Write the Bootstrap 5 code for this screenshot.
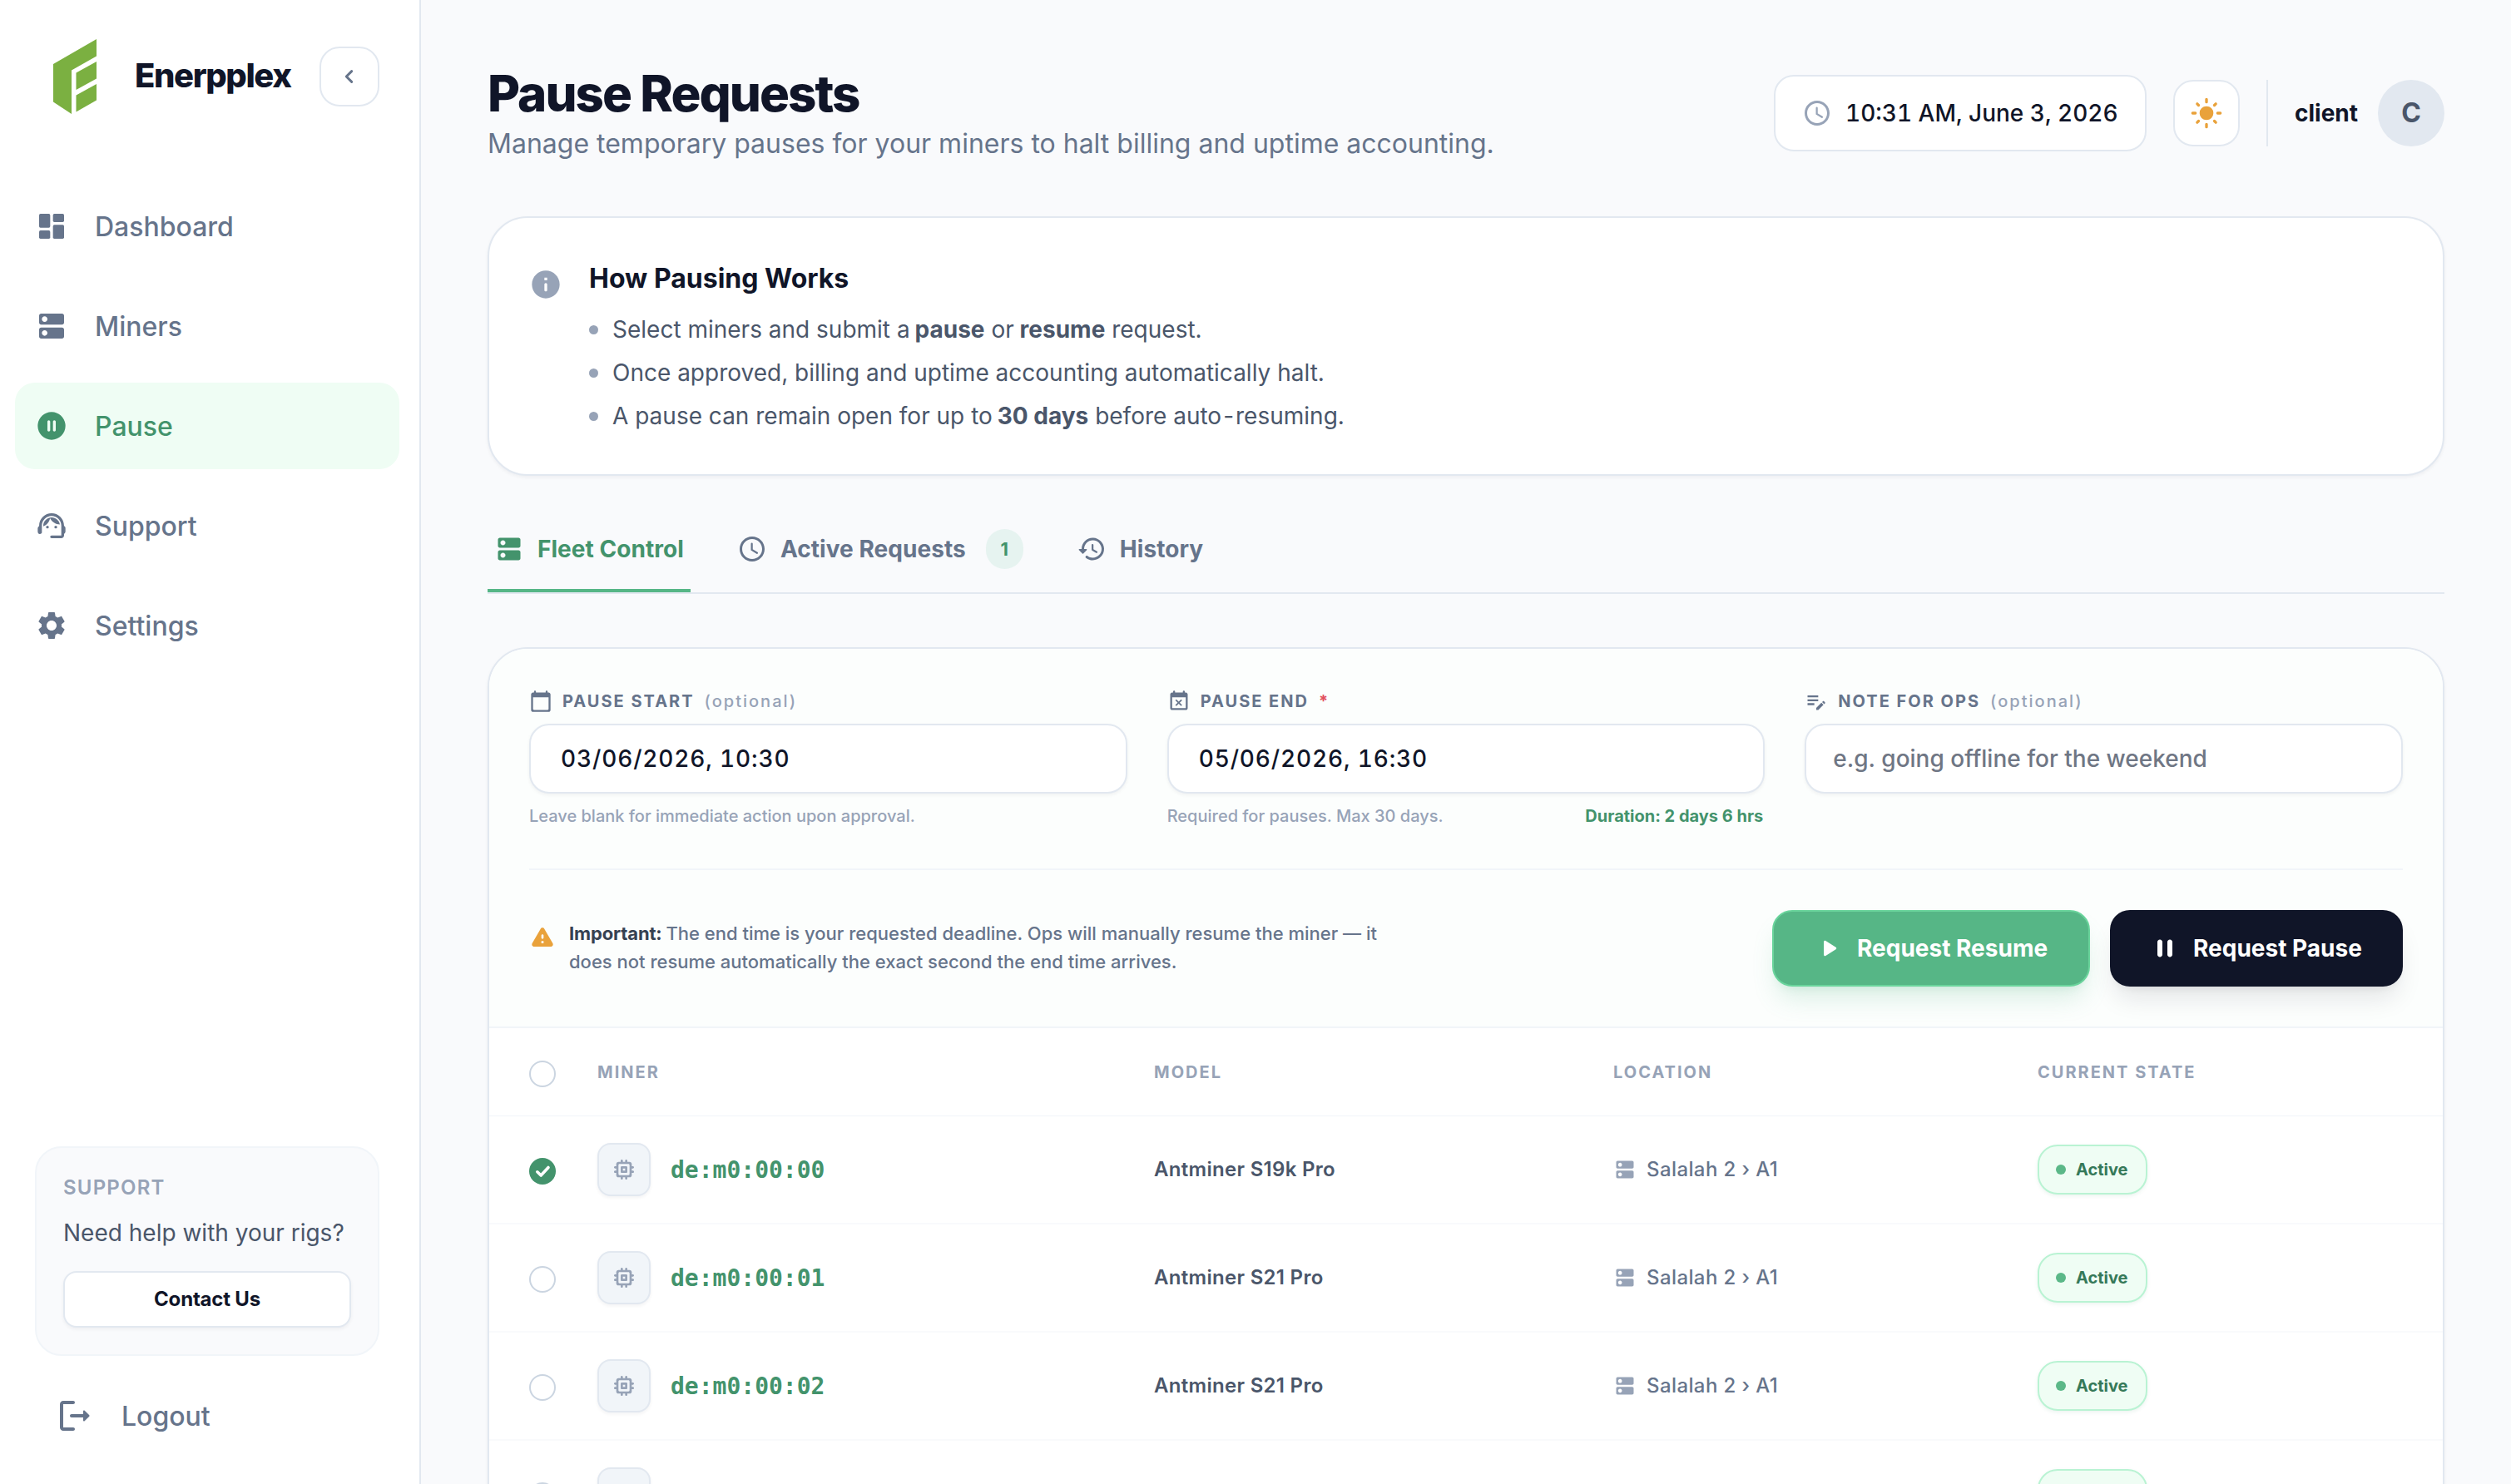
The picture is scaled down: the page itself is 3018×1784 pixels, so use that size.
<!DOCTYPE html>
<html lang="en">
    <head>
        <meta charset="UTF-8" />
        <meta name="viewport" content="width=device-width, initial-scale=1.0" />
        <title>Enerpplex - Pause Requests</title>
        <link
            href="https://cdn.jsdelivr.net/npm/bootstrap@5.3.0/dist/css/bootstrap.min.css"
            rel="stylesheet"
        />
        <script src="https://cdn.jsdelivr.net/npm/bootstrap@5.3.0/dist/js/bootstrap.bundle.min.js"></script>

        <style>
            :root {
                --ink: #101528;
                --ink-soft: #4a566a;
                --slate: #66748b;
                --mist: #97a3b7;
                --line: #e2e8f0;
                --line-soft: #f1f5f9;
                --green: #43936c;
            }

            body {
                font-family: Inter, "Liberation Sans", sans-serif;
                font-size: 28px;
                color: var(--ink);
                background-color: #f9fafc;
            }

            svg {
                fill: currentColor;
                flex: none;
            }

            .i-28 { width: 28px; height: 28px; }
            .i-32 { width: 32px; height: 32px; }
            .i-36 { width: 36px; height: 36px; }
            .i-40 { width: 40px; height: 40px; }
            .i-48 { width: 48px; height: 48px; }
            .text-slate { color: var(--slate); }
            .text-mist { color: var(--mist); }
            .text-green { color: var(--green); }

            /* sidebar */
            .sidebar {
                width: 506px;
                flex: none;
                border-right: 2px solid var(--line);
            }
            .brand {
                height: 184px;
                padding: 0 48px 0 64px;
            }
            .brand-name {
                font-size: 40px;
                font-weight: 800;
                letter-spacing: -1.4px;
                margin-left: 46px;
                padding-bottom: 2px;
            }
            .collapse-btn {
                width: 72px;
                height: 72px;
                border: 2px solid var(--line);
                border-radius: 24px;
            }
            .side-nav {
                gap: 16px;
                padding: 36px 24px 0 18px;
            }
            .side-nav .nav-link,
            .logout {
                color: var(--slate);
                font-size: 32px;
                font-weight: 500;
            }
            .side-nav .nav-link span,
            .logout span {
                padding-top: 2px;
            }
            .side-nav .nav-link {
                height: 104px;
                padding: 0 24px;
                gap: 32px;
                border-radius: 24px;
            }
            .side-nav .nav-link.active {
                color: var(--green);
                background-color: #effdf4;
            }
            .help-box {
                height: 252px;
                margin: 0 48px 0 42px;
                padding: 32px;
                background-color: #f9fafc;
                border: 2px solid var(--line-soft);
                border-radius: 32px;
            }
            .help-title {
                font-size: 24px;
                font-weight: 600;
                letter-spacing: 1.2px;
                line-height: 32px;
            }
            .help-text {
                line-height: 44px;
                margin: 16px 0 24px;
                color: var(--ink-soft);
            }
            .help-btn {
                height: 68px;
                font-size: 24px;
                font-weight: 700;
                letter-spacing: -0.2px;
                color: var(--ink);
                background-color: #fff;
                border: 2px solid var(--line);
                border-radius: 16px;
                box-shadow: 0 2px 4px rgba(15, 23, 42, 0.05);
            }
            .logout {
                height: 96px;
                margin: 24px 0 34px 66px;
                gap: 32px;
            }

            /* page header */
            .page {
                padding: 76px 80px 0;
                min-width: 0;
            }
            .page-title {
                font-size: 60px;
                font-weight: 800;
                line-height: 72px;
                letter-spacing: -1.95px;
            }
            .page-sub {
                font-size: 32px;
                line-height: 49px;
                margin-bottom: -1px;
            }
            .clock-box {
                width: 448px;
                height: 92px;
                padding-left: 32px;
                gap: 16px;
                font-weight: 500;
                font-variant-numeric: tabular-nums;
                background-color: #fff;
                border: 2px solid var(--line);
                border-radius: 24px;
            }
            .theme-btn {
                width: 80px;
                height: 80px;
                color: #e9a23b;
                background-color: #fff;
                border: 2px solid var(--line);
                border-radius: 24px;
            }
            .header-tools {
                gap: 32px;
            }
            .user-box {
                width: 214px;
                height: 80px;
                gap: 24px;
                font-weight: 700;
                border-left: 2px solid var(--line);
            }
            .avatar {
                width: 80px;
                height: 80px;
                font-size: 32px;
                font-weight: 700;
                color: var(--ink-soft);
                background-color: var(--line);
            }

            /* cards */
            .panel {
                background-color: #fff;
                border: 2px solid var(--line);
                border-radius: 48px;
                box-shadow: 0 2px 4px rgba(15, 23, 42, 0.05);
            }
            .how-panel {
                margin-top: 64px;
                padding: 48px;
                gap: 32px;
            }
            .how-icon {
                margin-top: 12px;
            }
            .how-title {
                font-size: 32px;
                font-weight: 700;
                line-height: 49px;
                margin-bottom: 16px;
            }
            .how-list {
                gap: 10px;
                color: var(--ink-soft);
            }
            .how-list li {
                display: flex;
                align-items: center;
                line-height: 42px;
            }
            .how-list li:last-child {
                margin-bottom: 1px;
            }
            .how-list strong {
                margin-left: -2px;
            }
            .how-list strong + strong {
                margin-left: -1px;
            }
            .how-list .dash {
                margin: 0 2px;
            }
            .how-list li::before {
                content: "";
                width: 11px;
                height: 11px;
                margin-right: 17px;
                border-radius: 50%;
                background-color: var(--mist);
            }

            /* tabs */
            .tab-row {
                margin-top: 40px;
                gap: 48px;
                border-bottom: 2px solid var(--line);
            }
            .tab-row .nav-link {
                height: 100px;
                padding: 0 8px;
                gap: 16px;
                color: var(--slate);
                font-weight: 700;
                letter-spacing: 0.05px;
                border-bottom: 4px solid transparent;
            }
            .tab-row .nav-link.active {
                color: var(--green);
                border-bottom-color: #56b686;
            }
            .count {
                width: 45px;
                height: 48px;
                margin-left: 8px;
                font-size: 22px;
                color: var(--green);
                background-color: #e6f3f0;
                border-radius: 24px;
            }

            /* request form */
            .fleet-panel {
                margin-top: 64px;
                height: 1100px;
                overflow: hidden;
            }
            .request-form {
                padding: 48px;
                background-color: #fcfefd;
                border-bottom: 2px solid var(--line-soft);
            }
            .form-grid {
                display: grid;
                grid-template-columns: repeat(3, 1fr);
                gap: 48px;
                padding-bottom: 48px;
                border-bottom: 2px solid var(--line-soft);
            }
            .field-label {
                height: 30px;
                gap: 12px;
                font-size: 20px;
                font-weight: 700;
                letter-spacing: 2px;
            }
            .field-label .opt {
                font-weight: 500;
                color: var(--mist);
            }
            .field-label .req {
                color: #e2515f;
            }
            .field-input {
                height: 84px;
                margin: 12px 0;
                padding: 0 32px;
                font-size: 28px;
                font-weight: 500;
                color: var(--ink);
                border: 2px solid var(--line);
                border-radius: 24px;
                box-shadow: 0 2px 4px rgba(15, 23, 42, 0.05);
            }
            .field-date {
                padding-left: 36px;
                letter-spacing: 0.85px;
                font-variant-numeric: tabular-nums;
            }
            .field-input::placeholder {
                color: #6f7684;
            }
            .field-hint {
                font-size: 20px;
                font-weight: 500;
                line-height: 30px;
                color: var(--mist);
            }
            .duration {
                font-weight: 700;
                margin-right: 2px;
            }
            .form-foot {
                padding-top: 48px;
            }
            .notice {
                gap: 16px;
                font-size: 22px;
                font-weight: 500;
                line-height: 34.5px;
                color: var(--slate);
            }
            .notice p {
                width: 1000px;
                padding-bottom: 2px;
            }
            .notice svg {
                margin-top: 5px;
                color: #e9a23b;
            }
            .notice strong {
                margin-right: -1px;
                letter-spacing: -0.15px;
                color: #364152;
            }
            .action-btn {
                height: 92px;
                padding: 0 0 0 48px;
                gap: 16px;
                font-size: 28px;
                font-weight: 700;
                color: #fff;
                border: 0;
                border-radius: 24px;
            }
            .btn-resume {
                width: 382px;
                background-color: #56b686;
                border: 2px solid #6ad49c;
                box-shadow: 0 20px 30px -6px rgba(86, 182, 134, 0.2),
                    0 8px 12px -8px rgba(86, 182, 134, 0.2);
            }
            .btn-pause {
                width: 352px;
                background-color: var(--ink);
                box-shadow: 0 20px 30px -6px rgba(15, 23, 42, 0.1),
                    0 8px 12px -8px rgba(15, 23, 42, 0.1);
            }

            /* miners table */
            .miner-table {
                table-layout: fixed;
                border-collapse: separate;
                border-spacing: 0;
                --bs-table-bg: #fff;
            }
            .miner-table th,
            .miner-table td {
                padding: 0;
                vertical-align: middle;
            }
            .miner-table th {
                height: 106px;
                font-size: 20px;
                font-weight: 700;
                letter-spacing: 2px;
                color: var(--mist);
                border-bottom: 1px solid var(--line-soft);
            }
            .miner-table td {
                height: 130px;
                font-size: 24px;
                border-bottom: 2px solid #f9fafc;
            }
            .miner-table th:first-child,
            .miner-table td:first-child {
                padding: 4px 0 0 48px;
            }
            .pick {
                display: block;
                width: 32px;
                height: 32px;
                border: 2px solid #cbd5e1;
                border-radius: 50%;
            }
            .chip {
                width: 64px;
                height: 64px;
                color: var(--mist);
                background-color: var(--line-soft);
                border: 2px solid var(--line);
                border-radius: 16px;
                box-shadow: 0 2px 4px rgba(15, 23, 42, 0.05);
            }
            .miner-id {
                padding-top: 1px;
                font-family: "DejaVu Sans Mono", monospace;
                font-size: 28px;
                font-weight: 700;
            }
            .miner-table .model {
                font-weight: 600;
                letter-spacing: 0.3px;
                color: var(--ink-soft);
            }
            .place {
                gap: 12px;
                font-weight: 500;
                letter-spacing: 0.4px;
            }
            .state {
                width: 132px;
                height: 60px;
                padding-left: 20px;
                gap: 12px;
                font-size: 20px;
                font-weight: 700;
                color: #357959;
                background-color: #effdf4;
                border: 2px solid #b9f3d3;
                border-radius: 24px;
                box-shadow: 0 2px 4px rgba(67, 147, 108, 0.1);
            }
            .state::before {
                content: "";
                width: 12px;
                height: 12px;
                border-radius: 50%;
                background-color: #5bb888;
            }
        </style>
    </head>
    <body class="vh-100 overflow-hidden">
        <!-- icon set -->
        <svg class="d-none">
            <symbol id="dashboard" viewBox="0 0 24 24">
                <rect x="3" y="3" width="8" height="10" rx="1" />
                <rect x="3" y="15" width="8" height="6" rx="1" />
                <rect x="13" y="3" width="8" height="6" rx="1" />
                <rect x="13" y="11" width="8" height="10" rx="1" />
            </symbol>
            <symbol id="dns" viewBox="0 0 24 24">
                <path d="M19.5 3h-15C3.67 3 3 3.67 3 4.5v5c0 .83.67 1.5 1.5 1.5h15c.83 0 1.5-.67 1.5-1.5v-5c0-.83-.67-1.5-1.5-1.5zM7 9c-1.1 0-2-.9-2-2s.9-2 2-2 2 .9 2 2-.9 2-2 2zM19.5 13h-15c-.83 0-1.5.67-1.5 1.5v5c0 .83.67 1.5 1.5 1.5h15c.83 0 1.5-.67 1.5-1.5v-5c0-.83-.67-1.5-1.5-1.5zM7 19c-1.1 0-2-.9-2-2s.9-2 2-2 2 .9 2 2-.9 2-2 2z" />
            </symbol>
            <symbol id="pause-circle" viewBox="0 0 24 24">
                <path d="M12 2C6.48 2 2 6.48 2 12s4.48 10 10 10 10-4.48 10-10S17.52 2 12 2zm-2 14c-.55 0-1-.45-1-1V9c0-.55.45-1 1-1s1 .45 1 1v6c0 .55-.45 1-1 1zm4 0c-.55 0-1-.45-1-1V9c0-.55.45-1 1-1s1 .45 1 1v6c0 .55-.45 1-1 1z" />
            </symbol>
            <symbol id="agent" viewBox="0 0 24 24">
                <path d="M21 12.22C21 6.73 16.74 3 12 3c-4.69 0-9 3.65-9 9.28-.6.34-1 .98-1 1.72v2c0 1.1.45 2 1.5 2S5 17.3 5 17v-5.1c0-3.87 3.13-7 7-7s7 3.13 7 7V19h-7c-.55 0-1 .45-1 1s.45 1 1 1h7c1.1 0 2-.9 2-2v-1.22c.59-.31 1-.92 1-1.64v-2.3c0-.7-.41-1.31-1-1.62z" />
                <circle cx="9" cy="13" r="1" />
                <circle cx="15" cy="13" r="1" />
                <path d="M18 11.03C17.52 8.18 15.04 6 12.05 6c-3.03 0-6.29 2.51-6.03 6.45 2.47-1.01 4.33-3.21 4.86-5.89 1.31 2.63 4 4.44 7.12 4.47z" />
            </symbol>
            <symbol id="gear" viewBox="0 0 24 24">
                <path d="M19.14 12.94c.04-.3.06-.61.06-.94 0-.32-.02-.64-.07-.94l2.03-1.58c.18-.14.23-.41.12-.61l-1.92-3.32c-.12-.22-.37-.29-.59-.22l-2.39.96c-.5-.38-1.03-.7-1.62-.94l-.36-2.54c-.04-.24-.24-.41-.48-.41h-3.84c-.24 0-.43.17-.47.41l-.36 2.54c-.59.24-1.13.57-1.62.94l-2.39-.96c-.22-.08-.47 0-.59.22L2.74 8.87c-.12.21-.08.47.12.61l2.03 1.58c-.05.3-.09.63-.09.94s.02.64.07.94l-2.03 1.58c-.18.14-.23.41-.12.61l1.92 3.32c.12.22.37.29.59.22l2.39-.96c.5.38 1.03.7 1.62.94l.36 2.54c.05.24.24.41.48.41h3.84c.24 0 .44-.17.47-.41l.36-2.54c.59-.24 1.13-.56 1.62-.94l2.39.96c.22.08.47 0 .59-.22l1.92-3.32c.12-.22.07-.47-.12-.61l-2.01-1.58zM12 15.6c-1.98 0-3.6-1.62-3.6-3.6s1.62-3.6 3.6-3.6 3.6 1.62 3.6 3.6-1.62 3.6-3.6 3.6z" />
            </symbol>
            <symbol id="logout" viewBox="0 0 24 24">
                <path d="M5 5h6c.55 0 1-.45 1-1s-.45-1-1-1H5c-1.1 0-2 .9-2 2v14c0 1.1.9 2 2 2h6c.55 0 1-.45 1-1s-.45-1-1-1H5V5z" />
                <path d="M20.65 11.65l-2.79-2.79c-.32-.32-.86-.1-.86.35V11h-7c-.55 0-1 .45-1 1s.45 1 1 1h7v1.79c0 .45.54.67.85.35l2.79-2.79c.2-.19.2-.51.01-.7z" />
            </symbol>
            <symbol id="info" viewBox="0 0 24 24">
                <path d="M12 2C6.48 2 2 6.48 2 12s4.48 10 10 10 10-4.48 10-10S17.52 2 12 2zm0 15c-.55 0-1-.45-1-1v-4c0-.55.45-1 1-1s1 .45 1 1v4c0 .55-.45 1-1 1zm1-8h-2V7h2v2z" />
            </symbol>
            <symbol id="clock" viewBox="0 0 24 24">
                <path d="M12 2C6.48 2 2 6.48 2 12s4.48 10 10 10 10-4.48 10-10S17.52 2 12 2zm0 18c-4.42 0-8-3.58-8-8s3.58-8 8-8 8 3.58 8 8-3.58 8-8 8z" />
                <path d="M11.75 7.75v4.9l4.2 2.5" fill="none" stroke="currentColor" stroke-width="1.5" stroke-linecap="round" />
            </symbol>
            <symbol id="sun" viewBox="0 0 24 24">
                <circle cx="12" cy="12" r="5" />
                <path d="M12 2v2M12 20v2M2 12h2M20 12h2M5.3 5.3l1 1M17.7 17.7l1 1M5.3 18.7l1-1M17.7 6.3l1-1" fill="none" stroke="currentColor" stroke-width="2" stroke-linecap="round" />
            </symbol>
            <symbol id="history" viewBox="0 0 24 24">
                <path d="M13.26 3C8.17 2.86 4 6.95 4 12H2.21c-.45 0-.67.54-.35.85l2.79 2.8c.2.2.51.2.71 0l2.79-2.8c.31-.31.09-.85-.36-.85H6c0-3.9 3.18-7.05 7.1-7 3.72.05 6.85 3.18 6.9 6.9.05 3.91-3.1 7.1-7 7.1-1.61 0-3.1-.55-4.28-1.48-.4-.31-.96-.28-1.32.08-.42.42-.39 1.13.08 1.49C9 20.29 10.91 21 13 21c5.05 0 9.14-4.17 9-9.26-.13-4.69-4.05-8.61-8.74-8.74zm-.51 5c-.41 0-.75.34-.75.75v3.68c0 .35.19.68.49.86l3.12 1.85c.36.21.82.09 1.03-.26.21-.36.09-.82-.26-1.03l-2.88-1.71v-3.4c0-.4-.34-.74-.75-.74z" />
            </symbol>
            <symbol id="calendar" viewBox="0 0 24 24">
                <path d="M20 3h-1V2c0-.55-.45-1-1-1s-1 .45-1 1v1H7V2c0-.55-.45-1-1-1s-1 .45-1 1v1H4c-1.1 0-2 .9-2 2v16c0 1.1.9 2 2 2h16c1.1 0 2-.9 2-2V5c0-1.1-.9-2-2-2zm-1 18H5c-.55 0-1-.45-1-1V8h16v12c0 .55-.45 1-1 1z" />
            </symbol>
            <symbol id="event-busy" viewBox="0 0 24 24">
                <path d="M9.31 17l2.44-2.44L14.19 17l1.06-1.06-2.44-2.44 2.44-2.44L14.19 10l-2.44 2.44L9.31 10l-1.06 1.06 2.44 2.44-2.44 2.44L9.31 17zM19 3h-1V2c0-.55-.45-1-1-1s-1 .45-1 1v1H8V2c0-.55-.45-1-1-1s-1 .45-1 1v1H5c-1.11 0-2 .9-2 2v14c0 1.1.89 2 2 2h14c1.1 0 2-.9 2-2V5c0-1.1-.9-2-2-2zm0 16H5V8h14v11z" />
            </symbol>
            <symbol id="edit-note" viewBox="0 0 24 24">
                <path d="M3 10h11v2H3v-2zm0-2h11V6H3v2zm0 8h7v-2H3v2zm15.01-3.13.71-.71c.39-.39 1.02-.39 1.41 0l.71.71c.39.39.39 1.02 0 1.41l-.71.71-2.12-2.12zm-.71.71-5.3 5.3V21h2.12l5.3-5.3-2.12-2.12z" />
            </symbol>
            <symbol id="warning" viewBox="0 0 24 24">
                <path d="M4.47 21h15.06c1.54 0 2.5-1.67 1.73-3L13.73 4.99c-.77-1.33-2.69-1.33-3.46 0L2.74 18c-.77 1.33.19 3 1.73 3zM12 14c-.55 0-1-.45-1-1v-2c0-.55.45-1 1-1s1 .45 1 1v2c0 .55-.45 1-1 1zm1 4h-2v-2h2v2z" />
            </symbol>
            <symbol id="play" viewBox="0 0 24 24">
                <path d="M8 6.82v10.36c0 .79.87 1.27 1.54.84l8.14-5.18c.62-.39.62-1.29 0-1.69L9.54 5.98C8.87 5.55 8 6.03 8 6.82z" />
            </symbol>
            <symbol id="pause" viewBox="0 0 24 24">
                <path d="M8 19c1.1 0 2-.9 2-2V7c0-1.1-.9-2-2-2s-2 .9-2 2v10c0 1.1.9 2 2 2zm6-12v10c0 1.1.9 2 2 2s2-.9 2-2V7c0-1.1-.9-2-2-2s-2 .9-2 2z" />
            </symbol>
            <symbol id="memory" viewBox="0 0 24 24">
                <path d="M14 9h-4c-.55 0-1 .45-1 1v4c0 .55.45 1 1 1h4c.55 0 1-.45 1-1v-4c0-.55-.45-1-1-1zm-1 4h-2v-2h2v2zm8-3c0-.55-.45-1-1-1h-1V7c0-1.1-.9-2-2-2h-2V4c0-.55-.45-1-1-1s-1 .45-1 1v1h-2V4c0-.55-.45-1-1-1s-1 .45-1 1v1H7c-1.1 0-2 .9-2 2v2H4c-.55 0-1 .45-1 1s.45 1 1 1h1v2H4c-.55 0-1 .45-1 1s.45 1 1 1h1v2c0 1.1.9 2 2 2h2v1c0 .55.45 1 1 1s1-.45 1-1v-1h2v1c0 .55.45 1 1 1s1-.45 1-1v-1h2c1.1 0 2-.9 2-2v-2h1c.55 0 1-.45 1-1s-.45-1-1-1h-1v-2h1c.55 0 1-.45 1-1zm-5 7H8c-.55 0-1-.45-1-1V8c0-.55.45-1 1-1h8c.55 0 1 .45 1 1v8c0 .55-.45 1-1 1z" />
            </symbol>
            <symbol id="check" viewBox="0 0 32 32">
                <circle cx="16" cy="16" r="16" />
                <path d="M9.8 16.8l4.4 4.2L23 11.5" fill="none" stroke="#fff" stroke-width="3.6" stroke-linecap="round" stroke-linejoin="round" />
            </symbol>
        </svg>

        <div class="d-flex h-100">
            <aside class="sidebar d-flex flex-column bg-white">
                <div class="brand d-flex align-items-center">
                    <svg width="52" height="90" viewBox="0 0 52 90" color="#7bb041">
                        <path d="M0 30L52 0v20.5L22 37.5V90L0 75.5zM27.5 40.5L52 27v20.5L27.5 61zM27.5 67.5L52 54v19.5L27.5 87.5z" />
                    </svg>
                    <span class="brand-name">Enerpplex</span>
                    <button class="collapse-btn btn p-0 bg-white ms-auto text-slate d-flex align-items-center justify-content-center">
                        <svg class="i-32" viewBox="0 0 24 24">
                            <path d="M14 7.2L9.2 12l4.8 4.8" fill="none" stroke="currentColor" stroke-width="2.2" stroke-linecap="round" stroke-linejoin="round" />
                        </svg>
                    </button>
                </div>

                <nav class="side-nav nav flex-column">
                    <a class="nav-link d-flex align-items-center" href="#"><svg class="i-40"><use href="#dashboard" /></svg><span>Dashboard</span></a>
                    <a class="nav-link d-flex align-items-center" href="#"><svg class="i-40"><use href="#dns" /></svg><span>Miners</span></a>
                    <a class="nav-link active d-flex align-items-center" href="#"><svg class="i-40"><use href="#pause-circle" /></svg><span>Pause</span></a>
                    <a class="nav-link d-flex align-items-center" href="#"><svg class="i-40"><use href="#agent" /></svg><span>Support</span></a>
                    <a class="nav-link d-flex align-items-center" href="#"><svg class="i-40"><use href="#gear" /></svg><span>Settings</span></a>
                </nav>

                <div class="mt-auto">
                    <div class="help-box">
                        <div class="help-title text-mist">SUPPORT</div>
                        <div class="help-text text-nowrap">Need help with your rigs?</div>
                        <button class="help-btn btn w-100 p-0">Contact Us</button>
                    </div>
                    <a class="logout d-flex align-items-center text-decoration-none" href="#"><svg class="i-48"><use href="#logout" /></svg><span>Logout</span></a>
                </div>
            </aside>

            <main class="page flex-grow-1 overflow-hidden">
                <header class="d-flex justify-content-between align-items-center">
                    <div>
                        <h1 class="page-title mb-0">Pause Requests</h1>
                        <p class="page-sub text-slate">Manage temporary pauses for your miners to halt billing and uptime accounting.</p>
                    </div>
                    <div class="header-tools d-flex align-items-center">
                        <div class="clock-box d-flex align-items-center">
                            <svg class="i-36 text-mist"><use href="#clock" /></svg><span>10:31 AM, June 3, 2026</span>
                        </div>
                        <button class="theme-btn btn p-0 d-flex align-items-center justify-content-center"><svg class="i-40"><use href="#sun" /></svg></button>
                        <div class="user-box d-flex align-items-center justify-content-end">
                            <span>client</span>
                            <span class="avatar rounded-circle d-flex align-items-center justify-content-center">C</span>
                        </div>
                    </div>
                </header>

                <section class="panel how-panel d-flex align-items-start">
                    <svg class="how-icon i-40 text-mist"><use href="#info" /></svg>
                    <div>
                        <h2 class="how-title">How Pausing Works</h2>
                        <ul class="how-list list-unstyled d-flex flex-column mb-0">
                            <li><span>Select miners and submit a <strong>pause</strong> or <strong>resume</strong> request.</span></li>
                            <li><span>Once approved, billing and uptime accounting automatically halt.</span></li>
                            <li><span>A pause can remain open for up to <strong>30 days</strong> before auto<span class="dash">-</span>resuming.</span></li>
                        </ul>
                    </div>
                </section>

                <nav class="tab-row nav">
                    <a class="nav-link active d-flex align-items-center" href="#"><svg class="i-36"><use href="#dns" /></svg>Fleet Control</a>
                    <a class="nav-link d-flex align-items-center" href="#"><svg class="i-36"><use href="#clock" /></svg>Active Requests<span class="count d-flex align-items-center justify-content-center">1</span></a>
                    <a class="nav-link d-flex align-items-center" href="#"><svg class="i-36"><use href="#history" /></svg>History</a>
                </nav>

                <section class="panel fleet-panel">
                    <form class="request-form">
                        <div class="form-grid">
                            <div>
                                <label class="field-label text-slate d-flex align-items-center"><svg class="i-28"><use href="#calendar" /></svg><span>PAUSE START</span> <span class="opt">(optional)</span></label>
                                <input class="field-input field-date form-control" type="text" value="03/06/2026, 10:30" />
                                <div class="field-hint">Leave blank for immediate action upon approval.</div>
                            </div>
                            <div>
                                <label class="field-label text-slate d-flex align-items-center"><svg class="i-28"><use href="#event-busy" /></svg><span>PAUSE END</span> <span class="req">*</span></label>
                                <input class="field-input field-date form-control" type="text" value="05/06/2026, 16:30" />
                                <div class="field-hint d-flex justify-content-between"><span>Required for pauses. Max 30 days.</span><span class="duration text-green">Duration: 2 days 6 hrs</span></div>
                            </div>
                            <div>
                                <label class="field-label text-slate d-flex align-items-center"><svg class="i-28"><use href="#edit-note" /></svg><span>NOTE FOR OPS</span> <span class="opt">(optional)</span></label>
                                <input class="field-input form-control" type="text" placeholder="e.g. going offline for the weekend" />
                            </div>
                        </div>
                        <div class="form-foot d-flex justify-content-between align-items-center">
                            <div class="notice d-flex align-items-start">
                                <svg class="i-32"><use href="#warning" /></svg>
                                <p class="mb-0"><strong>Important:</strong> The end time is your requested deadline. Ops will manually resume the miner — it does not resume automatically the exact second the end time arrives.</p>
                            </div>
                            <div class="d-flex gap-4">
                                <button type="button" class="action-btn btn-resume btn d-flex align-items-center"><svg class="i-36"><use href="#play" /></svg><span>Request Resume</span></button>
                                <button type="button" class="action-btn btn-pause btn d-flex align-items-center"><svg class="i-36"><use href="#pause" /></svg><span>Request Pause</span></button>
                            </div>
                        </div>
                    </form>

                    <table class="miner-table table mb-0">
                        <colgroup>
                            <col width="130" />
                            <col width="669" />
                            <col width="552" />
                            <col width="510" />
                            <col />
                        </colgroup>
                        <thead>
                            <tr><th><span class="pick"></span></th><th>MINER</th><th>MODEL</th><th>LOCATION</th><th>CURRENT STATE</th></tr>
                        </thead>
                        <tbody id="minerRows"></tbody>
                    </table>
                </section>
            </main>
        </div>

        <script>
            var miners = [
                { id: "de:m0:00:00", model: "Antminer S19k Pro", picked: true },
                { id: "de:m0:00:01", model: "Antminer S21 Pro" },
                { id: "de:m0:00:02", model: "Antminer S21 Pro" },
                { id: "de:m0:00:03", model: "Antminer S21 Pro" },
            ];
            var rows = "";
            // build one table row per miner
            miners.forEach(function (miner) {
                var pick = miner.picked
                    ? '<svg class="i-32 d-block text-green"><use href="#check" /></svg>'
                    : '<span class="pick"></span>';
                rows +=
                    "<tr><td>" + pick + "</td>" +
                    '<td><div class="d-flex align-items-center gap-4"><span class="chip d-flex align-items-center justify-content-center"><svg class="i-32"><use href="#memory" /></svg></span><span class="miner-id text-green">' + miner.id + "</span></div></td>" +
                    '<td class="model">' + miner.model + "</td>" +
                    '<td><div class="place d-flex align-items-center text-slate"><svg class="i-28 text-mist"><use href="#dns" /></svg><span>Salalah 2 › A1</span></div></td>' +
                    '<td><span class="state d-flex align-items-center"><span>Active</span></span></td></tr>';
            });
            document.getElementById("minerRows").innerHTML = rows;
        </script>
    </body>
</html>
